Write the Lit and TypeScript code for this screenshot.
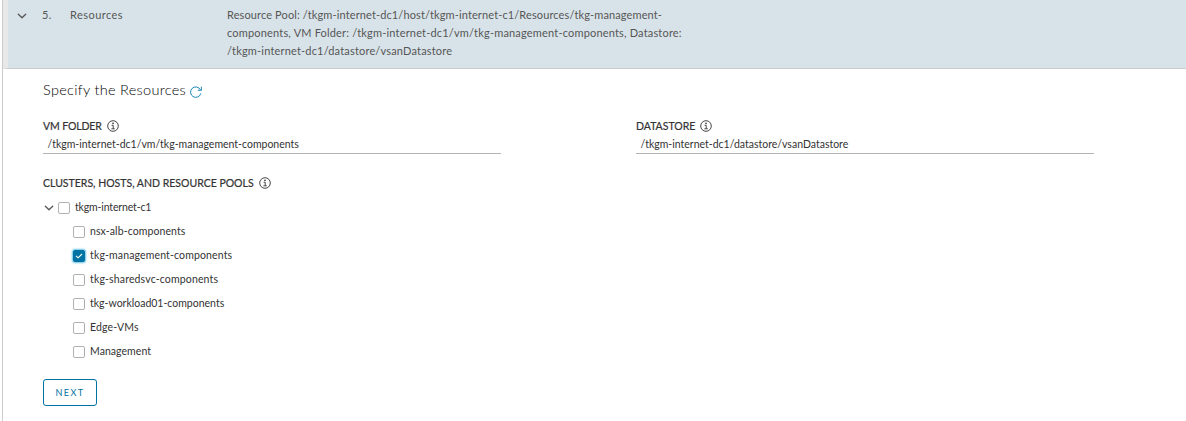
import { LitElement, html, css } from "lit";
import { customElement, property } from "lit/decorators.js";

@customElement("info-icon")
class InfoIcon extends LitElement {
  static styles = css`:host{display:block;width:12px;height:12px}svg{display:block}`;
  render() {
    return html`<svg width="12" height="12" viewBox="0 0 12 12" fill="none" stroke="#333">
      <circle cx="6" cy="6" r="5.3" stroke-width=".9"/>
      <circle cx="6" cy="3.4" r=".8" fill="#333" stroke="none"/>
      <path d="M4.6 5.3H6.2V8.6M4.4 8.8H7.8" stroke-width=".9"/></svg>`;
  }
}

@customElement("caret-icon")
class CaretIcon extends LitElement {
  static styles = css`:host{display:block;width:10px;height:6px}svg{display:block}`;
  render() {
    return html`<svg width="10" height="6" viewBox="0 0 10 6" fill="none" stroke="#565656" stroke-width="1.3" stroke-linecap="round" stroke-linejoin="round"><path d="M1.3 1.2L5 4.8L8.7 1.2"/></svg>`;
  }
}

@customElement("check-box")
class CheckBox extends LitElement {
  @property({ type: Boolean, reflect: true }) checked = false;
  static styles = css`
    :host{display:block;box-sizing:border-box;width:12px;height:12px;border:1px solid #b0b0b0;border-radius:2px;background:#fff}
    :host([checked]){background:#0072a3;border-color:#0072a3;box-shadow:0 0 2px 1px #6bc1e3}
    svg{display:block}
  `;
  render() {
    return html`${this.checked ? html`<svg width="10" height="10" viewBox="0 0 10 10" fill="none" stroke="#fff" stroke-width="1.1"><path d="M2 4.8L4.1 6.8L8 3"/></svg>` : ""}`;
  }
}

interface Pool {
  name: string;
  tracking: number;
  checked?: boolean;
}

@customElement("app-root")
class AppRoot extends LitElement {
  static styles = css`
    :host{display:block;box-sizing:border-box;height:421px;overflow:hidden;background:#fff;padding-left:2px;font-family:Lato,sans-serif;font-size:10.5px;color:#333}
    .panel{height:421px;border-left:1px solid #ccc;box-sizing:border-box}
    .head{display:grid;grid-template-columns:25px 28px 157px 480px;height:69px;box-sizing:border-box;border-left:5px solid #e8e8e8;padding:6px 0 0 9px;background:#d8e3e9;border-bottom:1px solid #ccc;line-height:18px;color:#565656;font-size:11px}
    .head caret-icon{margin-top:7px}
    .step{letter-spacing:.4px}
    .line{display:block;white-space:nowrap;letter-spacing:.18px}
    .line.first{letter-spacing:.12px}
    .name{letter-spacing:.45px}
    .body{padding-left:40px}
    .title{display:flex;align-items:center;height:24px;margin-top:8px;font-size:14.5px;font-weight:300;color:#000;white-space:nowrap}
    .title span{width:143px;letter-spacing:.3px}
    .title svg{margin:5px 0 0 4px}
    .fields{display:flex;gap:135px;margin-top:18px}
    .field{width:458px}
    .label{display:flex;align-items:center;height:14px;gap:5px;font-size:10.5px;white-space:nowrap;color:#333;-webkit-text-stroke:.2px #333}
    .label.folder span{letter-spacing:-.12px}
    .value{height:21px;line-height:23px;padding-left:4.5px;border-bottom:1px solid #b3b3b3;box-sizing:border-box}
    .clusters{margin-top:22px}
    .row{display:flex;align-items:center;height:24px;white-space:nowrap;padding-left:30px}
    .row.root{padding-left:1px;margin-top:6px}
    .row.root check-box{margin-left:4px}
    .row span{margin:-2px 0 0 5px}
    .row.root span{letter-spacing:-.15px}
    .next{display:flex;align-items:center;justify-content:center;width:54px;height:27px;box-sizing:border-box;border:1px solid #0072a3;border-radius:3px;margin-top:15px;color:#0072a3;font-size:9px;letter-spacing:1.4px;background:#fff}
  `;
  pools: Pool[] = [
    { name: "nsx-alb-components", tracking: 0.1 },
    { name: "tkg-management-components", tracking: 0.14 },
    { name: "tkg-sharedsvc-components", tracking: 0.15 },
    { name: "tkg-workload01-components", tracking: 0 },
    { name: "Edge-VMs", tracking: 0.16 },
    { name: "Management", tracking: 0.05 },
  ];
  selected = "tkg-management-components";
  render() {
    return html`<div class="panel">
      <div class="head"><caret-icon></caret-icon><span class="step">5.</span><span class="name">Resources</span>
        <div><span class="line first">Resource Pool: /tkgm-internet-dc1/host/tkgm-internet-c1/Resources/tkg-management-</span><span class="line">components, VM Folder: /tkgm-internet-dc1/vm/tkg-management-components, Datastore:</span><span class="line">/tkgm-internet-dc1/datastore/vsanDatastore</span></div>
      </div>
      <div class="body">
        <div class="title"><span>Specify the Resources</span><svg width="12" height="12" viewBox="0 0 12 12" fill="none" stroke="#0079ad" stroke-width=".9"><path d="M10.8 7.4A5.2 5.2 0 1 1 10.4 3.8M11.4 .8V4.3H7.8"/></svg></div>
        <div class="fields">
          <div class="field"><div class="label folder"><span>VM FOLDER</span><info-icon></info-icon></div><div class="value">/tkgm-internet-dc1/vm/tkg-management-components</div></div>
          <div class="field"><div class="label"><span>DATASTORE</span><info-icon></info-icon></div><div class="value">/tkgm-internet-dc1/datastore/vsanDatastore</div></div>
        </div>
        <div class="clusters"><div class="label"><span>CLUSTERS, HOSTS, AND RESOURCE POOLS</span><info-icon></info-icon></div>
          <div class="row root"><caret-icon></caret-icon><check-box></check-box><span>tkgm-internet-c1</span></div>
          ${this.pools.map((p) => html`<div class="row"><check-box ?checked=${p.name === this.selected}></check-box><span style="letter-spacing:${p.tracking}px">${p.name}</span></div>`)}
        </div>
        <div class="next">NEXT</div>
      </div></div>`;
  }
}
